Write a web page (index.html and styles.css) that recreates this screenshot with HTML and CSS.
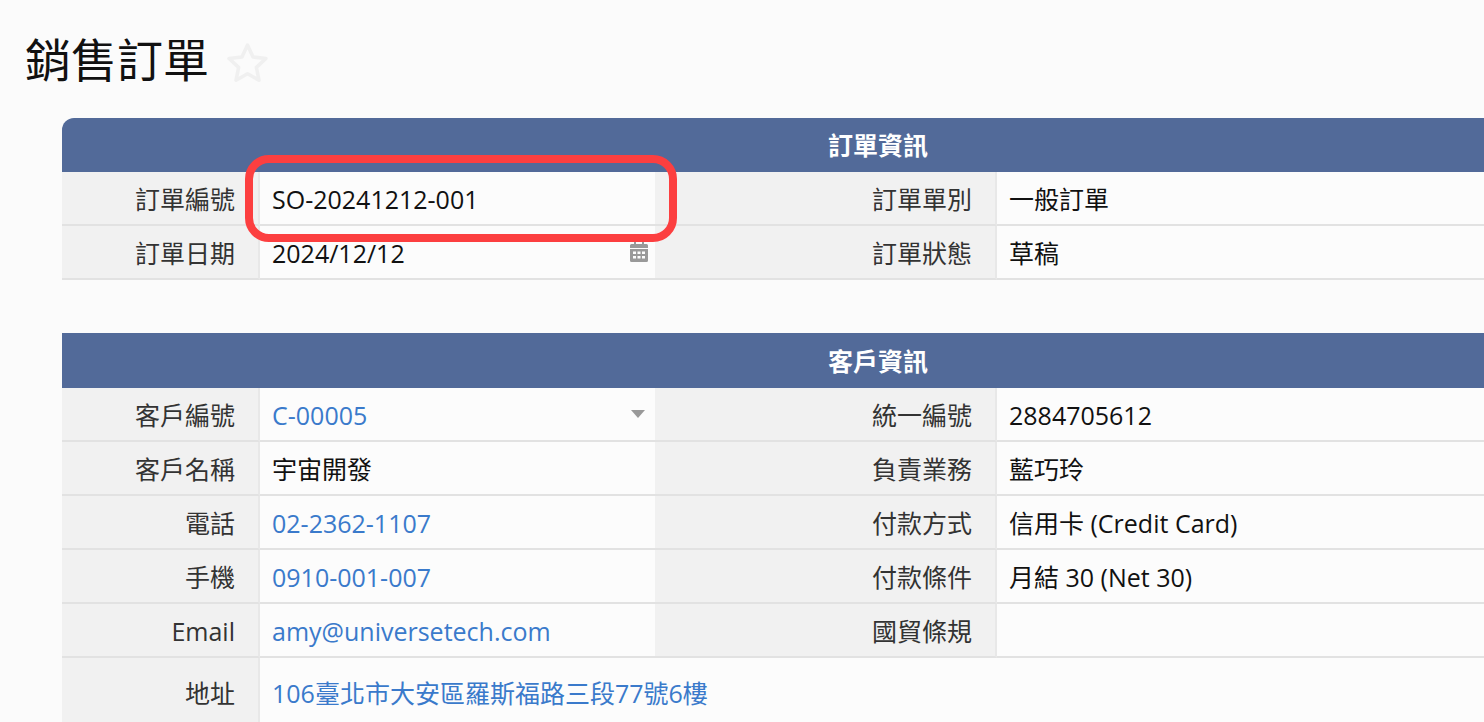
FILE: index.html
```html
<!DOCTYPE html>
<html lang="zh-Hant">
<head>
    <meta charset="UTF-8">
    <meta name="viewport" content="width=device-width, initial-scale=1.0">
    <title>銷售訂單</title>
    <link rel="stylesheet" href="styles.css">
</head>
<body>
    <div class="page-title">
        <h1>銷售訂單</h1>
        <svg class="star" viewBox="0 0 42 40" aria-hidden="true">
            <path d="M21 3l5.4 11.6 12.6 1.5-9.3 8.7 2.5 12.5L21 31l-11.2 6.3 2.5-12.5L3 16.100l12.600-1.500z"/>
        </svg>
    </div>

    <div class="form">
        <!-- 訂單資訊 -->
        <section class="block">
            <div class="block-header">訂單資訊</div>
            <div class="grid">
                <div class="label">訂單編號</div>
                <div class="value latin">SO-20241212-001</div>
                <div class="label">訂單單別</div>
                <div class="value">一般訂單</div>

                <div class="label">訂單日期</div>
                <div class="value latin has-icon">
                    2024/12/12
                    <svg class="cal-icon" viewBox="0 0 18 21" aria-hidden="true">
                        <path fill-rule="evenodd" d="M4 0h2v3h6V0h2v3h2.500A1.500 1.500 0 0 1 18 4.500V7H0V4.500A1.500 1.500 0 0 1 1.500 3H4zM0 8h18v11.500a1.500 1.500 0 0 1-1.500 1.500h-15A1.500 1.500 0 0 1 0 19.500zm3 2.500v2.500h3v-2.500zm4.500 0v2.500h3v-2.500zm4.500 0v2.500h3v-2.500zM3 15v2.500h3V15zm4.500 0v2.500h3V15zm4.500 0v2.500h3V15z"/>
                    </svg>
                </div>
                <div class="label">訂單狀態</div>
                <div class="value">草稿</div>
            </div>
        </section>

        <!-- 客戶資訊 -->
        <section class="block">
            <div class="block-header block-header-tall">客戶資訊</div>
            <div class="grid">
                <div class="label">客戶編號</div>
                <div class="value latin has-icon">
                    <a href="#">C-00005</a>
                    <span class="caret"></span>
                </div>
                <div class="label">統一編號</div>
                <div class="value latin">2884705612</div>

                <div class="label">客戶名稱</div>
                <div class="value">宇宙開發</div>
                <div class="label">負責業務</div>
                <div class="value">藍巧玲</div>

                <div class="label">電話</div>
                <div class="value latin"><a href="#">02-2362-1107</a></div>
                <div class="label">付款方式</div>
                <div class="value">信用卡 (Credit Card)</div>

                <div class="label">手機</div>
                <div class="value latin"><a href="#">0910-001-007</a></div>
                <div class="label">付款條件</div>
                <div class="value">月結 30 (Net 30)</div>

                <div class="label latin">Email</div>
                <div class="value latin"><a href="#">amy@universetech.com</a></div>
                <div class="label">國貿條規</div>
                <div class="value"></div>

                <div class="label tall">地址</div>
                <div class="value tall wide"><a href="#">106臺北市大安區羅斯福路三段77號6樓</a></div>
            </div>
        </section>

        <!-- 紅框標示 -->
        <div class="highlight"></div>
    </div>
</body>
</html>
```

FILE: styles.css
```css
html, body {
    height: 100%;
    overflow: hidden;
}

body {
    margin: 0;
    background-color: #fbfbfb;
    color: #111;
    font-family: 'Open Sans', 'Noto Sans CJK TC', sans-serif;
    font-size: 25px;
}

.page-title {
    display: flex;
    align-items: center;
    gap: 17px;
    height: 118px;
    padding-left: 25px;
    box-sizing: border-box;
}

.page-title h1 {
    margin: 0;
    font-size: 46px;
    font-weight: 400;
    line-height: 1;
    color: #111;
}

.star {
    width: 43px;
    height: 41px;
    margin-top: 6px;
    fill: none;
    stroke: #f0f0f0;
    stroke-width: 3.500;
    stroke-linejoin: round;
}

/* Form */
.form {
    position: relative;
    width: 1632px;
    margin-left: 62px;
}

.block {
    margin-bottom: 53px;
}

.block-header {
    height: 54px;
    line-height: 54px;
    background-color: #526a99;
    color: #ffffff;
    text-align: center;
    font-weight: 700;
}

.block-header-tall {
    height: 55px;
    line-height: 56px;
}

.block:first-child .block-header {
    border-top-left-radius: 12px;
    border-top-right-radius: 12px;
}

.grid {
    display: grid;
    grid-template-columns: 198px 395px 342px 697px;
    grid-auto-rows: 54px;
}

.label,
.value {
    display: flex;
    align-items: center;
    box-sizing: border-box;
    border-bottom: 2px solid #e2e2e2;
}

.label {
    justify-content: flex-end;
    padding-right: 23px;
    background-color: #f1f1f1;
    border-right: 2px solid #e8e8e8;
    color: #333;
}

.value {
    padding-left: 12px;
    background-color: #fcfcfc;
}

/* latin-only cells sit a pixel lower than the CJK ones */
.latin {
    padding-top: 2px;
}

.value a {
    color: #3a7acb;
    text-decoration: none;
}

.has-icon {
    justify-content: space-between;
    padding-right: 7px;
}

.cal-icon {
    width: 18px;
    height: 21px;
    fill: #999;
    margin-top: -4px;
}

.caret {
    width: 0;
    height: 0;
    margin-top: -2px;
    margin-right: 3px;
    border-left: 7px solid transparent;
    border-right: 7px solid transparent;
    border-top: 8px solid #999;
}

.tall {
    height: 70px;
}

.wide {
    grid-column: 2 / 5;
}

.highlight {
    position: absolute;
    left: 183px;
    top: 37px;
    width: 432px;
    height: 87px;
    box-sizing: border-box;
    border: 8px solid #fc3f40;
    border-radius: 24px;
}
```
